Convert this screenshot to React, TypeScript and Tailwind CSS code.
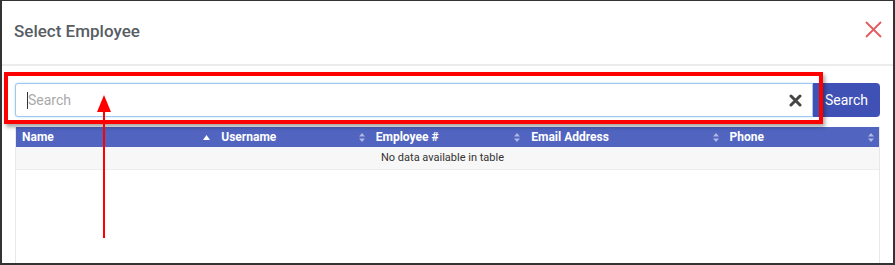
const columns = [
  { label: "Name", width: "w-[200px]", sort: "asc" },
  { label: "Username", width: "w-[155px]", sort: "both" },
  { label: "Employee #", width: "w-[156px]", sort: "both" },
  { label: "Email Address", width: "w-[199px]", sort: "both" },
  { label: "Phone", width: "w-[156px]", sort: "both" },
];

function SortIcon({ sort }: { sort: string }) {
  if (sort === "asc") {
    return (
      <svg width="7" height="5" viewBox="0 0 7 5" className="shrink-0">
        <path d="M0 5 L3.5 0 L7 5 Z" fill="#ffffff" />
      </svg>
    );
  }
  return (
    <svg width="6" height="9" viewBox="0 0 6 9" className="shrink-0">
      <path d="M0 3.5 L3 0 L6 3.5 Z" fill="#ffffff" fillOpacity="0.55" />
      <path d="M0 5.5 L3 9 L6 5.5 Z" fill="#ffffff" fillOpacity="0.55" />
    </svg>
  );
}

/** Employee picker modal with an annotation around the search field. */
export default function App() {
  return (
    <div className="relative w-[895px] h-[265px] overflow-hidden bg-white font-['Roboto',sans-serif]">
      <div className="flex h-full flex-col border-x-2 border-b-2 border-t border-[#333333] bg-white">
        <div className="flex h-[65px] shrink-0 items-center justify-between border-b-2 border-[#ececec] pl-[12px] pr-[11px]">
          <h2 className="mt-[-2px] text-[17px] font-medium text-[#585d64]">Select Employee</h2>
          <svg width="17" height="17" viewBox="0 0 17 17" className="mt-[-6px]">
            <path d="M1 1 L16 16 M16 1 L1 16" stroke="#e35b5b" strokeWidth="1.8" />
          </svg>
        </div>

        <div className="flex flex-1 flex-col px-[13px] pt-[17px]">
          <div className="flex h-[34px] shrink-0">
            <div className="flex flex-1 items-center rounded-l-[3px] border border-[#9fc8ec] bg-white pl-[11px] pr-[10px] shadow-[0_0_2px_rgba(102,175,233,0.5)]">
              <span className="h-[17px] w-px bg-[#333]" />
              <input
                placeholder="Search"
                className="flex-1 bg-transparent text-[14px] text-[#333] outline-none placeholder:text-[#a9a9a9]"
              />
              <svg width="13" height="13" viewBox="0 0 13 13">
                <path d="M2 2 L11 11 M11 2 L2 11" stroke="#454545" strokeWidth="3" strokeLinecap="round" />
              </svg>
            </div>
            <button className="w-[67px] rounded-r-[4px] bg-[#3f51b5] text-[14px] text-white">Search</button>
          </div>

          <div className="mt-[10px] flex flex-1 flex-col border-x border-[#e8e8e8]">
            <div className="flex h-[20px] shrink-0 bg-[#5064c0] text-[12px] font-bold text-white">
              {columns.map((c) => (
                <div key={c.label} className={`${c.width} flex items-center justify-between pl-[6px] pr-[5px]`}>
                  <span>{c.label}</span>
                  <SortIcon sort={c.sort} />
                </div>
              ))}
            </div>
            <div className="flex h-[23px] shrink-0 items-center justify-center border-b border-[#ececec] bg-[#f7f7f7] pr-[10px] text-[11px] text-[#333]">
              No data available in table
            </div>
          </div>
        </div>
      </div>

      {/* annotation */}
      <div className="absolute left-[4px] top-[72px] h-[52px] w-[819px] border-[4px] border-[#ff0000] shadow-[2px_3px_4px_rgba(0,0,0,0.35)]" />
      <svg className="absolute left-[96px] top-[94px]" width="16" height="146" viewBox="0 0 16 146">
        <path d="M8 1 L15 18 L1 18 Z" fill="#ff0000" />
        <rect x="7" y="16" width="2" height="128" fill="#ff0000" />
      </svg>
    </div>
  );
}
